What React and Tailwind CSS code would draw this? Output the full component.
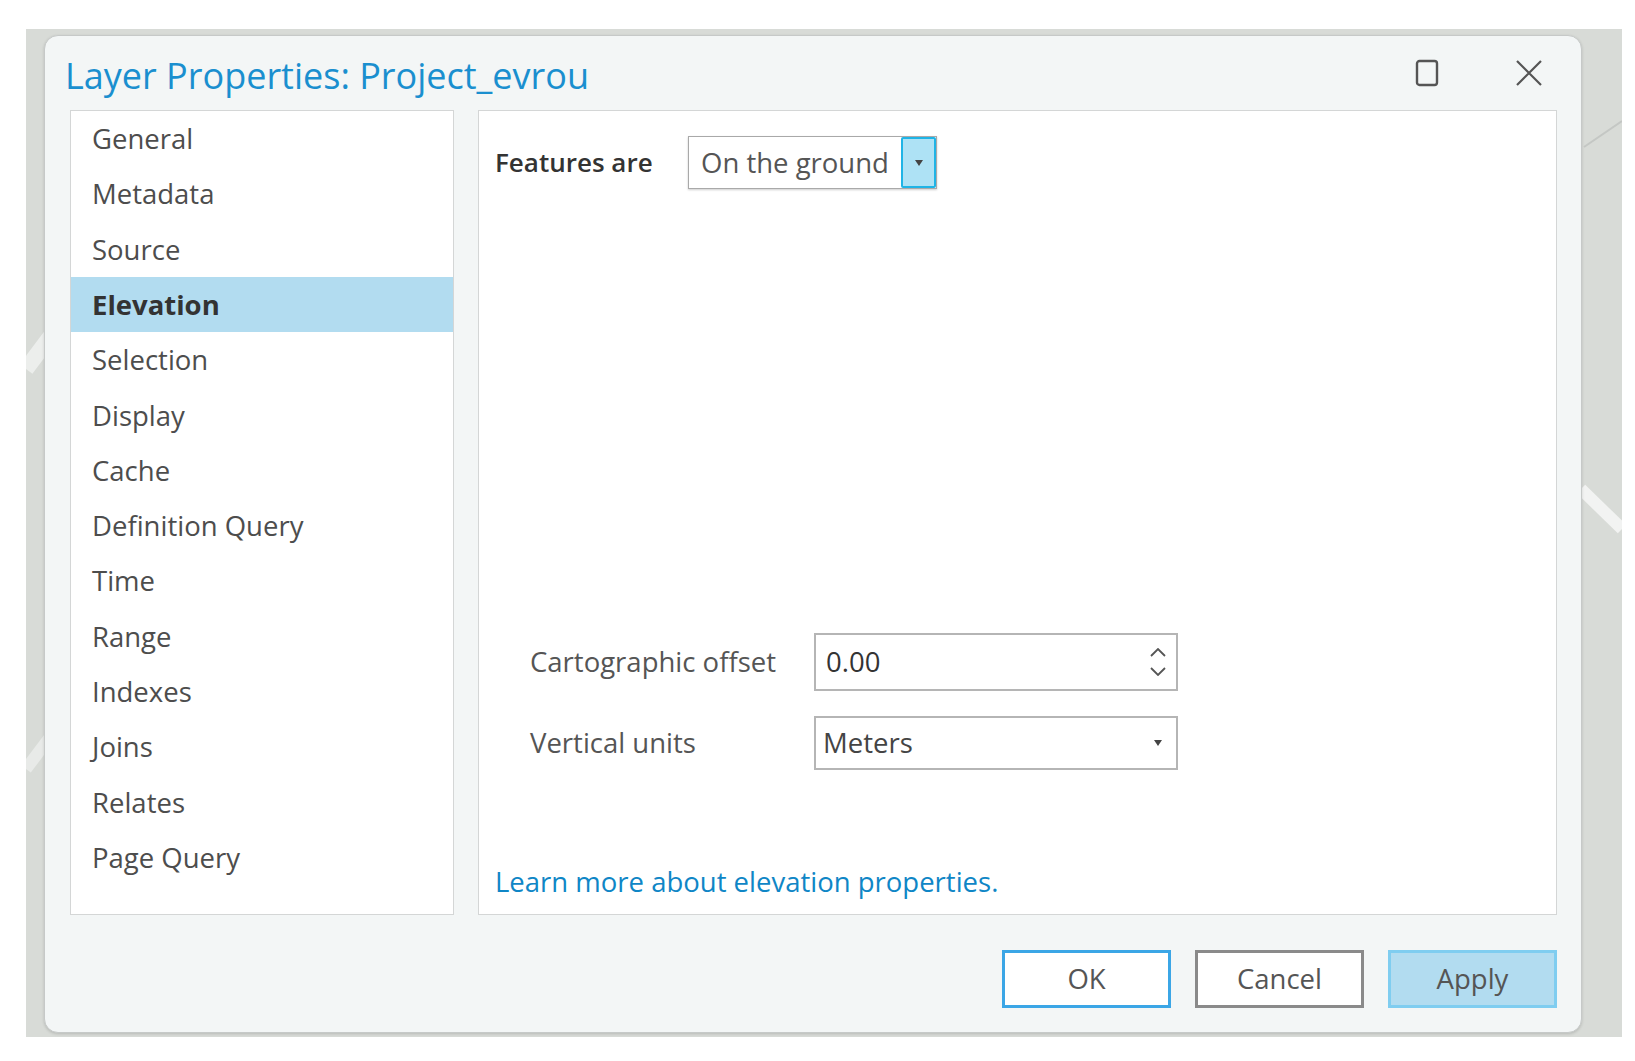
import React from 'react';

const items = [
  'General',
  'Metadata',
  'Source',
  'Elevation',
  'Selection',
  'Display',
  'Cache',
  'Definition Query',
  'Time',
  'Range',
  'Indexes',
  'Joins',
  'Relates',
  'Page Query',
];

function MapBackdrop() {
  return (
    <svg className="absolute inset-0 h-full w-full" viewBox="0 0 1596 1008" preserveAspectRatio="none">
      <path d="M0 340 L30 300" stroke="#eceeec" strokeWidth="16" fill="none" />
      <path d="M0 740 L30 700" stroke="#e8eae8" strokeWidth="12" fill="none" />
      <path d="M1555 460 L1596 500" stroke="#f2f3f2" strokeWidth="12" fill="none" />
      <path d="M1558 118 L1596 92" stroke="#c4c7c4" strokeWidth="2" fill="none" />
    </svg>
  );
}

function Caret({ className = '' }) {
  return (
    <svg className={className} width="8" height="6" viewBox="0 0 8 6">
      <path d="M0 0 L8 0 L4 6 Z" fill="#444" />
    </svg>
  );
}

export default function App() {
  return (
    <div className="w-[1635px] h-[1061px] bg-white overflow-hidden font-['Open_Sans','Noto_Sans',sans-serif]">
      <div className="relative ml-[26px] mt-[29px] w-[1596px] h-[1008px] bg-[#d8dbd7] pl-[18px] pt-[6px]">
        <MapBackdrop />
        <div className="relative flex flex-col w-[1538px] h-[998px] rounded-[14px] bg-[#f3f6f6] border border-[#c6c9c8] shadow-[0_1px_3px_rgba(0,0,0,0.15)]">
          {/* title bar */}
          <div className="flex items-center h-[74px] pl-[20px] pr-[38px] pt-[6px]">
            <h1 className="text-[36px] leading-none text-[#1a8fcf]">
              Layer Properties: Project_evrou
            </h1>
            <div className="ml-auto -mt-[6px] flex items-center gap-[76px]">
              <svg width="24" height="28" viewBox="0 0 24 28">
                <rect x="2" y="2" width="20" height="24" rx="2.5" fill="none" stroke="#555" strokeWidth="2.4" />
              </svg>
              <svg width="28" height="28" viewBox="0 0 28 28">
                <path d="M2 2 L26 26 M26 2 L2 26" stroke="#555" strokeWidth="2.2" fill="none" />
              </svg>
            </div>
          </div>

          {/* panels */}
          <div className="flex gap-[24px] pl-[25px] pr-[24px] h-[805px]">
            <div className="w-[384px] h-full bg-white border border-[#d4d6d6]">
              {items.map((item) => (
                <div
                  key={item}
                  className={`h-[55.3px] flex items-center pl-[21px] text-[27.5px] ${
                    item === 'Elevation'
                      ? 'bg-[#b2dcf0] font-bold text-[#333]'
                      : 'text-[#4d4d4d]'
                  }`}
                >
                  {item}
                </div>
              ))}
            </div>

            <div className="flex-1 h-full bg-white border border-[#d4d6d6] pl-[16px] pt-[25px]">
              <div className="flex items-center h-[53px]">
                <span className="w-[193px] text-[26px] font-semibold text-[#333]">Features are</span>
                <div className="flex h-[53px] border border-[#a9a9a9] shadow-[0_1px_2px_rgba(0,0,0,0.2)]">
                  <div className="w-[212px] flex items-center pl-[12px] text-[27.5px] text-[#555] whitespace-nowrap">
                    On the ground
                  </div>
                  <div className="w-[35px] flex items-center justify-center bg-[#aee2f5] border-2 border-[#1fb4e6] rounded-[2px]">
                    <Caret />
                  </div>
                </div>
              </div>

              <div className="flex items-center mt-[444px] pl-[35px] h-[58px]">
                <span className="w-[284px] text-[27.5px] text-[#555]">Cartographic offset</span>
                <div className="flex items-center w-[364px] h-[58px] border-2 border-[#b5b5b5] pl-[10px] pr-[10px] bg-white">
                  <span className="text-[27.5px] text-[#333]">0.00</span>
                  <div className="ml-auto flex flex-col items-center gap-[10px]">
                    <svg width="16" height="9" viewBox="0 0 16 9">
                      <path d="M1 8 L8 1 L15 8" stroke="#555" strokeWidth="1.8" fill="none" />
                    </svg>
                    <svg width="16" height="9" viewBox="0 0 16 9">
                      <path d="M1 1 L8 8 L15 1" stroke="#555" strokeWidth="1.8" fill="none" />
                    </svg>
                  </div>
                </div>
              </div>

              <div className="flex items-center mt-[25px] pl-[35px] h-[54px]">
                <span className="w-[284px] text-[27.5px] text-[#555]">Vertical units</span>
                <div className="flex items-center w-[364px] h-[54px] border-2 border-[#b5b5b5] pl-[7px] pr-[14px] bg-white">
                  <span className="text-[27.5px] text-[#444]">Meters</span>
                  <Caret className="ml-auto" />
                </div>
              </div>

              <div className="mt-[94px] h-[36px] flex items-center text-[27.5px] text-[#0f86c6]">
                Learn more about elevation properties.
              </div>
            </div>
          </div>

          {/* footer buttons */}
          <div className="flex justify-end gap-[24px] pt-[35px] pr-[24px]">
            <button className="w-[169px] h-[58px] bg-white border-[3px] border-[#3ba6e6] text-[27.5px] text-[#555]">
              OK
            </button>
            <button className="w-[169px] h-[58px] bg-white border-[3px] border-[#8a8a8a] text-[27.5px] text-[#555]">
              Cancel
            </button>
            <button className="w-[169px] h-[58px] bg-[#b2dcf0] border-[3px] border-[#7fcdf0] text-[27.5px] text-[#555]">
              Apply
            </button>
          </div>
        </div>
      </div>
    </div>
  );
}
